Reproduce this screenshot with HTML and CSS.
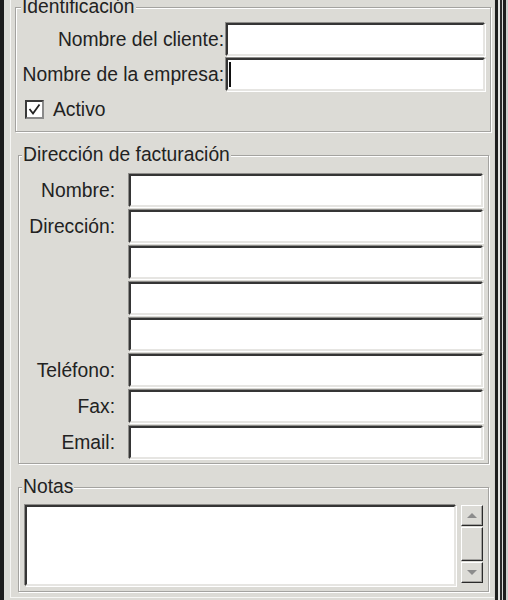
FILE: index.html
```html
<!DOCTYPE html>
<html lang="es">
<head>
  <meta charset="UTF-8">
  <title>Cliente</title>
  <link rel="stylesheet" href="styles.css">
</head>
<body>

  <div class="window">
    <div class="panel">

      <fieldset class="group group-id">
        <legend>Identificación</legend>
        <div class="form form-id">
          <label class="lbl" for="cliente">Nombre del cliente:</label>
          <input class="txt" type="text" id="cliente">
          <label class="lbl" for="empresa">Nombre de la empresa:</label>
          <div class="field">
            <input class="txt" type="text" id="empresa">
            <span class="caret"></span>
          </div>
        </div>
        <div class="check-row">
          <span class="check">
            <svg width="15" height="15" viewBox="0 0 15 15">
              <polyline points="2.5,7 6,11.5 12.5,2.5" fill="none" stroke="#222" stroke-width="1.8"/>
            </svg>
          </span>
          <span>Activo</span>
        </div>
      </fieldset>

      <fieldset class="group group-addr">
        <legend>Dirección de facturación</legend>
        <div class="form form-addr">
          <label class="lbl">Nombre:</label>
          <input class="txt" type="text">
          <label class="lbl">Dirección:</label>
          <input class="txt" type="text">
          <span></span>
          <input class="txt" type="text">
          <span></span>
          <input class="txt" type="text">
          <span></span>
          <input class="txt" type="text">
          <label class="lbl">Teléfono:</label>
          <input class="txt" type="text">
          <label class="lbl">Fax:</label>
          <input class="txt" type="text">
          <label class="lbl">Email:</label>
          <input class="txt" type="text">
        </div>
      </fieldset>

      <fieldset class="group group-notes">
        <legend>Notas</legend>
        <div class="notes-row">
          <textarea class="txt notes"></textarea>
          <div class="scrollbar">
            <div class="sb-btn">
              <svg width="10" height="5" viewBox="0 0 10 5"><polygon points="5,0 10,5 0,5" fill="#8c8c8c"/></svg>
            </div>
            <div class="sb-thumb"></div>
            <div class="sb-btn">
              <svg width="10" height="5" viewBox="0 0 10 5"><polygon points="0,0 10,0 5,5" fill="#8c8c8c"/></svg>
            </div>
          </div>
        </div>
      </fieldset>

    </div>
    <div class="edge"></div>
  </div>

</body>
</html>
```

FILE: styles.css
```css
body {
  margin: 0;
  background-color: #dcdbd6;
  font-family: "Liberation Sans", Arial, sans-serif;
  font-size: 19.3px;
  line-height: 22px;
  color: #222;
}

.window {
  display: flex;
  height: 600px;
  overflow: hidden;
  border-left: 4px solid #1c1c1c;
}

.panel {
  flex: 1;
  margin-left: 6px;
  margin-bottom: 2px;
  padding: 0 3px 0 4px;
  border-left: 1px solid #f6f6f4;
  border-bottom: 1px solid #f6f6f4;
}

.edge {
  width: 14px;
  background: linear-gradient(to right,
    #d4d3cf 0 1px,
    #1e1e1e 1px 4px,
    #e4e4e2 4px 6px,
    #2a2a2a 6px 8px,
    #d8d8d6 8px 9px,
    #1e1e1e 9px 12px,
    #cfcfcd 12px 14px);
}

/* group boxes */
.group {
  margin: 0;
  min-width: 0;
  padding: 0 5px 0 6px;
  border: 1px solid #a4a3a0;
  box-shadow: inset 1px 1px 0 #fff, 1px 1px 0 #fff;
}

.group legend {
  padding: 0 1px;
  line-height: 22px;
  background-color: #dcdbd6;
}

.group-id {
  margin-top: -4px;
  padding-bottom: 12px;
}

.group-id legend {
  margin-left: -1px;
}

.group-addr {
  margin: 12px 2px 0 3px;
  padding-bottom: 4px;
}

.group-notes {
  margin: 12px 2px 0 3px;
  padding-bottom: 5px;
}

.group-addr legend,
.group-notes legend {
  margin-left: -3px;
}

/* form rows */
.form {
  display: grid;
  align-items: center;
}

.form-id {
  margin-top: 5px;
  grid-template-columns: 202px 1fr;
  column-gap: 2px;
  row-gap: 2px;
}

.form-addr {
  margin-top: 8px;
  grid-template-columns: 90px 1fr;
  column-gap: 14px;
  row-gap: 3px;
}

.lbl {
  text-align: right;
  white-space: nowrap;
}

.txt {
  box-sizing: border-box;
  display: block;
  width: 100%;
  height: 33px;
  margin: 0;
  padding: 0 4px;
  background-color: #fff;
  border: 2px solid;
  border-color: #353535 #e6e5e2 #e6e5e2 #353535;
  box-shadow: -1px -1px 0 #8e8d8a, 1px 1px 0 #fff;
  outline: none;
  font: inherit;
}

.field {
  position: relative;
}

.caret {
  position: absolute;
  left: 3px;
  top: 4px;
  width: 2px;
  height: 25px;
  background-color: #111;
}

/* checkbox */
.check-row {
  display: flex;
  align-items: center;
  gap: 9px;
  height: 19px;
  margin-top: 9px;
  margin-left: 3px;
  line-height: 19px;
}

.check {
  box-sizing: border-box;
  width: 19px;
  height: 19px;
  background-color: #fff;
  border: 2px solid;
  border-color: #3a3a3a #8a8a8a #8a8a8a #3a3a3a;
}

.check svg {
  display: block;
}

/* notes */
.notes-row {
  display: flex;
  gap: 5px;
  margin-top: 7px;
}

.notes {
  flex: 1;
  height: 81px;
  resize: none;
}

.scrollbar {
  display: flex;
  flex-direction: column;
  width: 22px;
  height: 78px;
}

.sb-btn, .sb-thumb {
  box-sizing: border-box;
  background-color: #dcdbd6;
  border: 1px solid;
  border-color: #fff #2a2a2a #2a2a2a #fff;
  box-shadow: inset -1px -1px 0 #a2a19e;
}

.sb-btn {
  height: 21px;
  display: flex;
  align-items: center;
  justify-content: center;
}

.sb-thumb {
  flex: 1;
  margin: 1px 0;
}
```
